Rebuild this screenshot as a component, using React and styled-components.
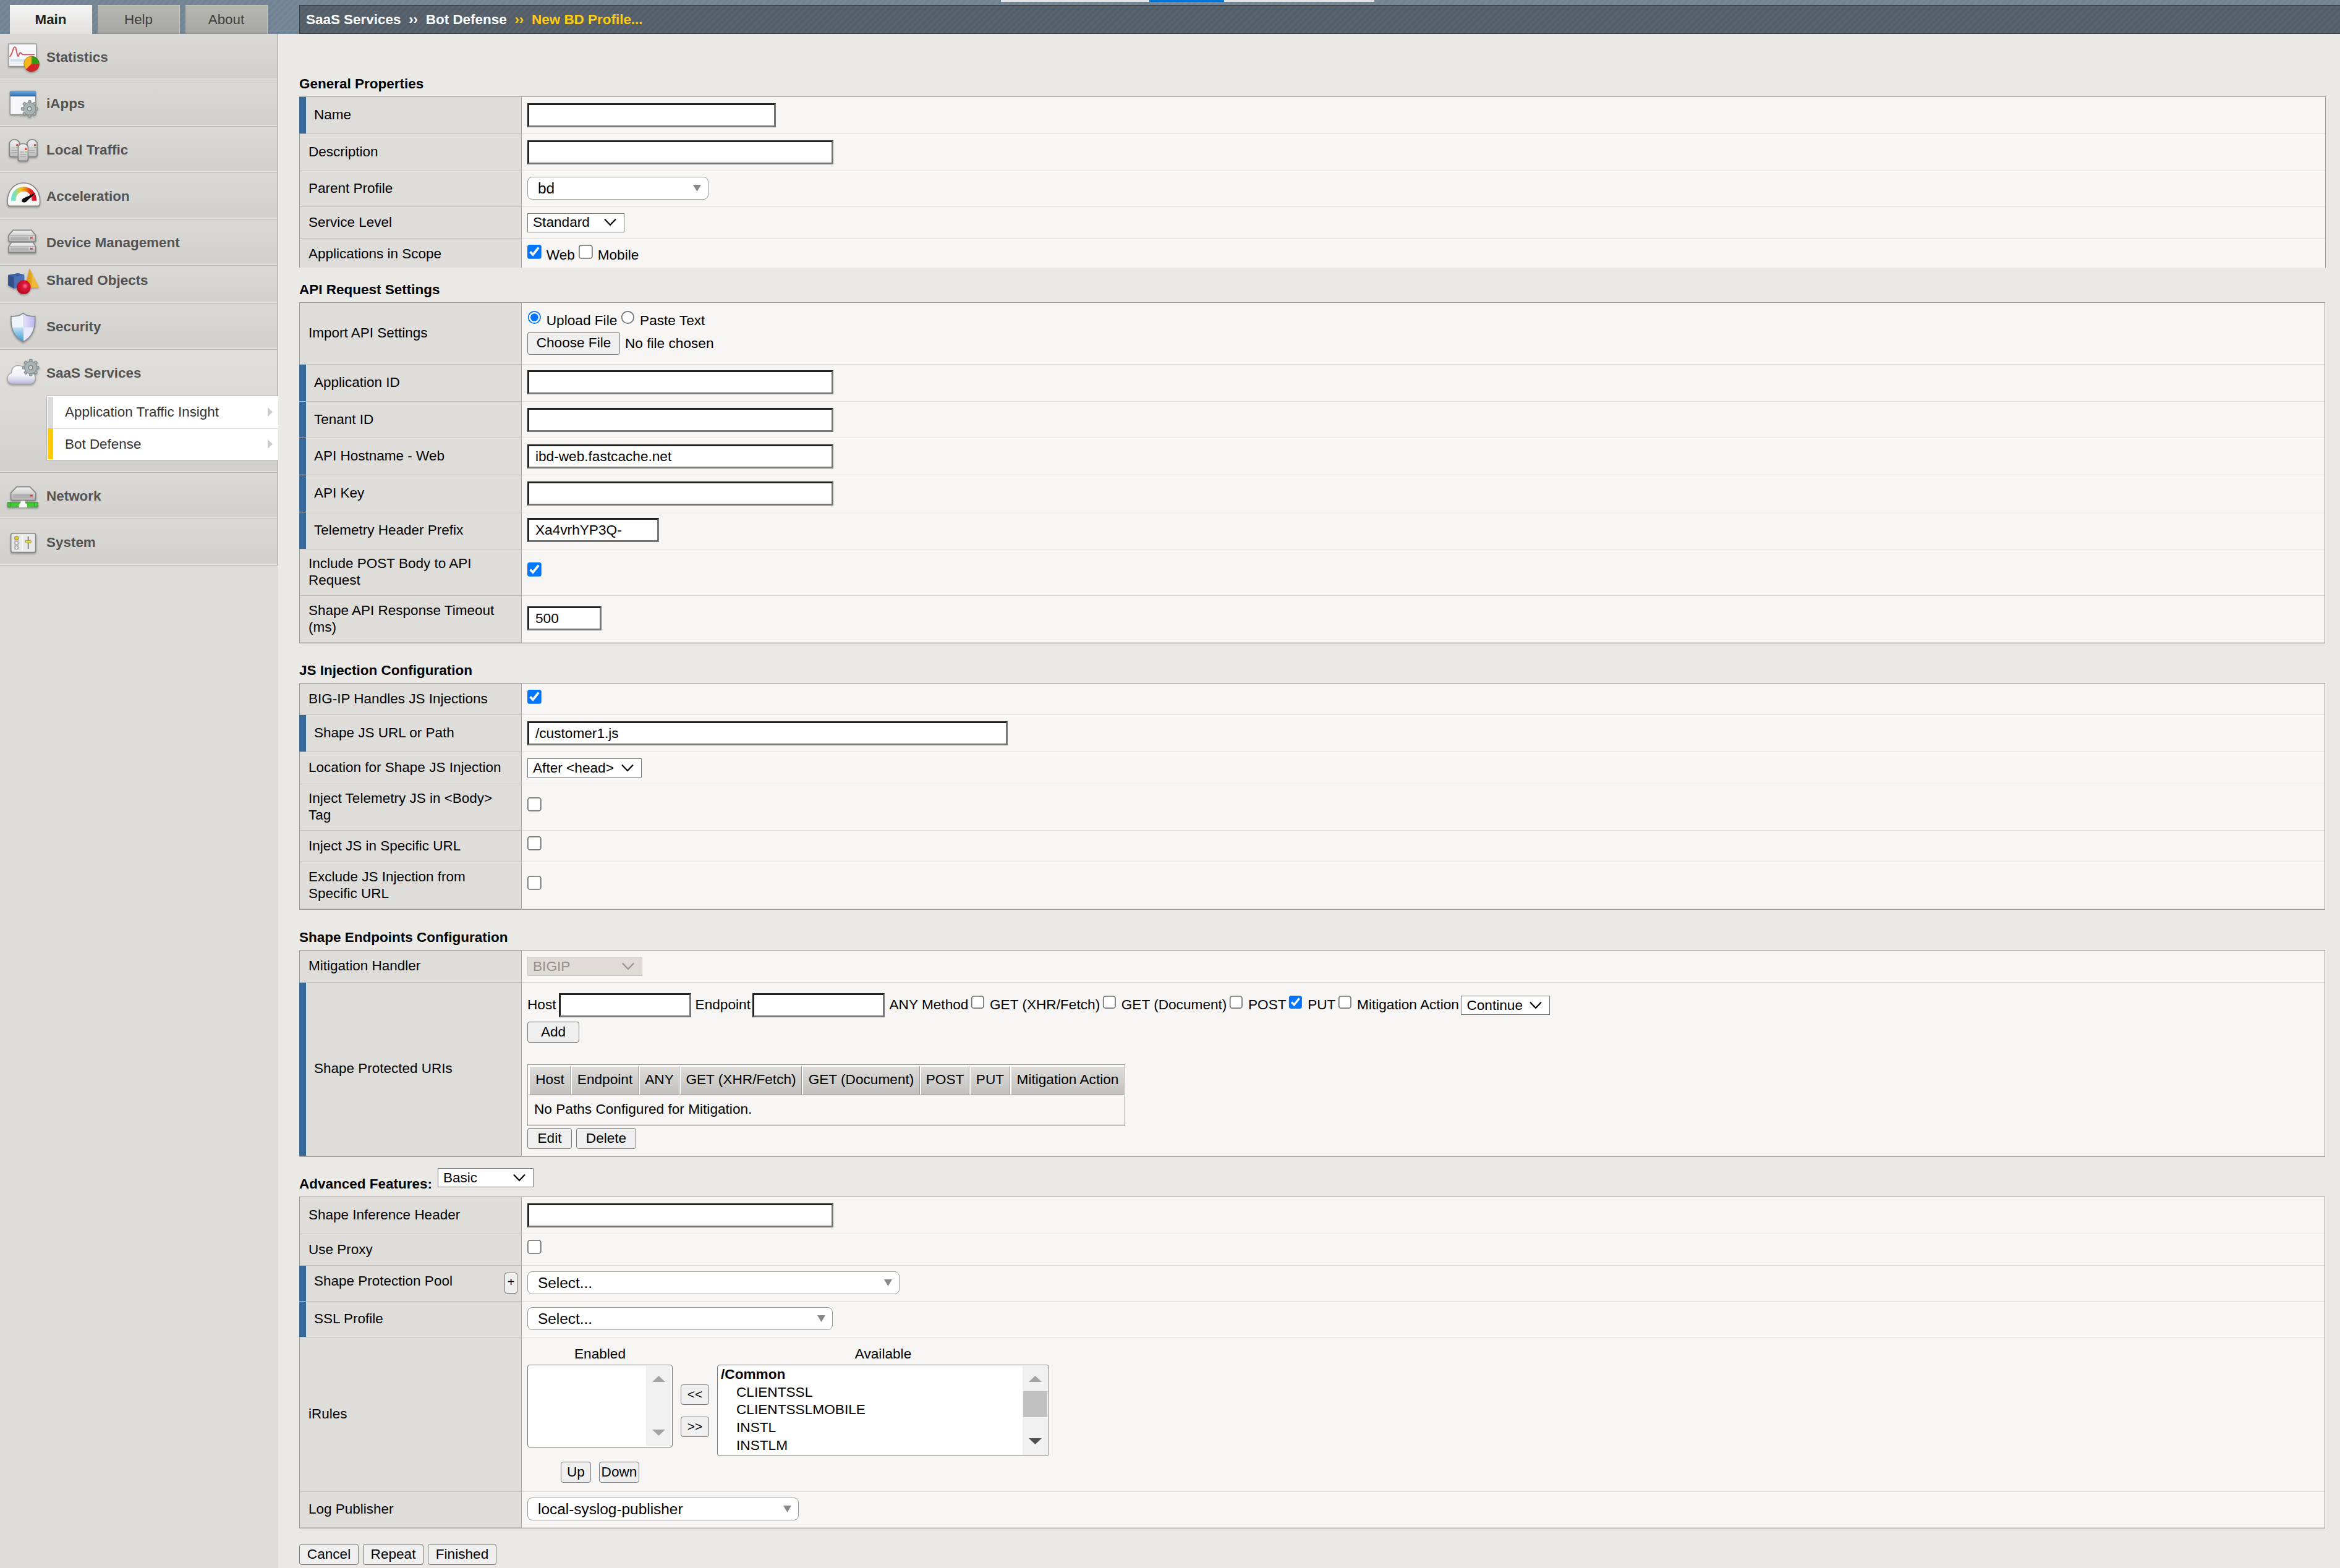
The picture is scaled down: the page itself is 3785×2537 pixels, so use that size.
import React from 'react';
import styled, { createGlobalStyle, css } from 'styled-components';

const GlobalStyle = createGlobalStyle`
  * { box-sizing: border-box; }
  html, body { margin: 0; padding: 0; background: #eae9e5; overflow: hidden; }
  body, input, button { font-family: "Liberation Sans", Arial, Helvetica, sans-serif; font-size: 22.65px; line-height: 27px; color: #000; }
`;

/* ---------- page frame ---------- */

const Page = styled.div`
  display: flex;
  flex-direction: column;
  width: 3785px;
  height: 2537px;
  position: relative;
`;

const stripes = css`
  background-image: repeating-linear-gradient(135deg, rgba(255, 255, 255, 0.02) 0 3.5px, rgba(0, 0, 0, 0.015) 3.5px 7px);
`;

const Header = styled.header`
  display: flex;
  align-items: stretch;
  height: 55px;
  padding: 8px 0 0 16px;
  background-color: #758697;
  ${stripes}
`;

const Tabs = styled.nav`
  display: flex;
  gap: 9px;
  width: 468px;
`;

const Tab = styled.div`
  display: flex;
  align-items: center;
  justify-content: center;
  width: 133px;
  font-size: 22.4px;
  font-weight: ${(p) => (p.$active ? 700 : 400)};
  color: ${(p) => (p.$active ? '#222' : '#3f3f3f')};
  background: ${(p) => (p.$active ? 'linear-gradient(#f3f3f1, #e2e1de)' : 'linear-gradient(#b7b7b2, #a6a6a2)')};
  border-top: 1px solid ${(p) => (p.$active ? '#fafaf8' : '#c6c6c2')};
  border-right: 1px solid ${(p) => (p.$active ? '#f3f3f1' : '#c9c9c6')};
  border-bottom: 1px solid ${(p) => (p.$active ? '#e2e1de' : '#8b8c8b')};
`;

const Breadcrumb = styled.div`
  flex: 1;
  display: flex;
  align-items: center;
  padding: 0 0 1px 10px;
  border: 1px solid #2f3841;
  border-right: 0;
  background-color: #545f6b;
  ${stripes}
  font-size: 22.45px;
  font-weight: 700;
  color: #fff;
`;

const Crumb = styled.span`
  color: ${(p) => (p.$current ? '#fc1' : '#fff')};
  & + & { margin-left: 12.7px; }
`;

const TopStrip = styled.div`
  position: absolute;
  top: 0;
  left: 1619px;
  display: flex;
  justify-content: center;
  width: 604px;
  height: 3px;
  background: #e3e4e8;
`;

const TopStripMark = styled.div`
  width: 121px;
  margin-right: 3px;
  background: #0078d7;
`;

const Body = styled.div`
  display: flex;
  flex: 1;
`;

/* ---------- sidebar ---------- */

const Sidebar = styled.aside`
  width: 450px;
  background: #dddcd8;
`;

const NavItem = styled.div`
  height: ${(p) => p.$h || 75}px;
  border-bottom: 1px solid #b8b7b5;
  border-right: 2px solid #bcbbb8;
  background: ${(p) => (p.$open ? 'linear-gradient(#dfdeda, #dcdbd7 40%, #d1d0cc)' : 'linear-gradient(#dad9d5, #d1d0cc)')};
  box-shadow: inset 0 -2px 0 #e2e1df;
`;

const NavHead = styled.div`
  display: flex;
  gap: 9px;
`;

const NavText = styled.div`
  padding-top: ${(p) => p.$top || 24}px;
  font-size: 22.45px;
  font-weight: 700;
  color: #535353;
`;

const SubMenu = styled.div`
  margin: 0 -2px 0 75px;
  border: 1px solid #b5b5b5;
  border-right: 0;
  padding: 1px 0 1px 1px;
  background: #fff;
`;

const SubItem = styled.div`
  display: flex;
  align-items: center;
  justify-content: space-between;
  height: 50.5px;
  padding: 0 9px 1px 19px;
  border-left: 9px solid ${(p) => (p.$active ? '#fc0' : '#dbdbdd')};
  font-size: 22.45px;
  color: #333;
  & + & { padding-top: 1px; padding-bottom: 0; box-shadow: inset 0 1px 0 #dedede; }
`;

const IconSvg = styled.svg`
  flex: none;
  width: 66px;
  filter: drop-shadow(0 2px 1.5px rgba(0, 0, 0, 0.28));
`;

/* The drawings use three units per pixel. */
const Icon = ({ y, h = 74, children }) => (
  <IconSvg viewBox={`0 ${y} 198 ${h * 3}`} height={h}>
    {children}
  </IconSvg>
);

const Gear = ({ cx, cy, fill = '#aab3b3' }) => (
  <g transform={`translate(${cx} ${cy})`} stroke="#7c8686" strokeWidth="3">
    {[0, 45, 90, 135, 180, 225, 270, 315].map((a) => (
      <rect key={a} x="-7" y="-40" width="14" height="18" rx="3" fill={fill} transform={`rotate(${a})`} />
    ))}
    <circle r="30" fill={fill} />
    <circle r="28" fill={fill} stroke="none" />
    <circle r="10" fill="#d9dad8" stroke="#818b8b" strokeWidth="5" />
  </g>
);

const StatisticsIcon = () => (
  <Icon y={-15}>
    <rect x="42" y="33" width="134" height="109" fill="#f8f8fa" stroke="#999" strokeWidth="4" />
    <rect x="50" y="107" width="90" height="12" fill="#cfdfee" />
    <rect x="50" y="124" width="80" height="7" fill="#e3ecf4" />
    <path d="M47 96l9-14 10-28q6-10 11 0l8 36q4 8 8-6 3-12 9-6l8 7h58" fill="none" stroke="#cf5a62" strokeWidth="6" />
    <circle cx="153" cy="130" r="38" fill="#f3b71b" />
    <path d="M153 130V92a38 38 0 0 1 38 38z" fill="#2f9b12" />
    <path d="M153 130h38a38 38 0 0 1-65 27z" fill="#d3212c" />
    <circle cx="153" cy="130" r="37" fill="none" stroke="#7a4a18" strokeOpacity=".45" strokeWidth="3" />
  </Icon>
);

const IAppsIcon = () => (
  <Icon y={210}>
    <defs>
      <linearGradient id="iappsBar" x1="0" y1="0" x2="0" y2="1">
        <stop offset="0" stopColor="#6aa9e0" />
        <stop offset="1" stopColor="#2f6fb0" />
      </linearGradient>
    </defs>
    <rect x="49" y="262" width="124" height="114" rx="4" fill="#f7f7fa" stroke="#8c8f92" strokeWidth="4" />
    <rect x="49" y="262" width="124" height="26" fill="url(#iappsBar)" />
    <Gear cx={143} cy={348} />
  </Icon>
);

const Tower = ({ x, y }) => (
  <g>
    <path d={`M${x} ${y + 14}l10-12q14-5 28 0l10 12v64q-4 5-10 5h-28q-8 0-10-5z`} fill="url(#towerFill)" stroke="#858585" strokeWidth="5" />
    <path d={`M${x + 10} ${y + 40}h18M${x + 10} ${y + 52}h28M${x + 10} ${y + 62}h28`} stroke="#aaa" strokeWidth="4" />
    <rect x={x + 33} y={y + 22} width="9" height="9" fill="#e0333c" />
    <rect x={x + 33} y={y + 36} width="9" height="6" fill="#7edb63" />
  </g>
);

const LocalTrafficIcon = () => (
  <Icon y={435}>
    <defs>
      <linearGradient id="towerFill" x1="0" y1="0" x2="0" y2="1">
        <stop offset="0" stopColor="#f1f1f1" />
        <stop offset="1" stopColor="#bcbcbc" />
      </linearGradient>
    </defs>
    <Tower x={46} y={498} />
    <Tower x={132} y={498} />
    <Tower x={88} y={518} />
  </Icon>
);

const AccelerationIcon = () => (
  <Icon y={660}>
    <defs>
      <linearGradient id="dial" x1="0" y1="0" x2="1" y2="0">
        <stop offset="0" stopColor="#6fe0d2" />
        <stop offset=".18" stopColor="#a6d97c" />
        <stop offset=".35" stopColor="#f3c31a" />
        <stop offset=".6" stopColor="#ef8416" />
        <stop offset=".8" stopColor="#e02b1b" />
        <stop offset="1" stopColor="#d81026" />
      </linearGradient>
    </defs>
    <path d="M36 798C36 742 72 708 115 708S194 742 194 798Q194 820 184 820H46Q36 820 36 798z" fill="#f7f7f5" stroke="#858585" strokeWidth="5" />
    <path d="M65 794C65 760 85 738 115 738S166 762 166 794" fill="none" stroke="url(#dial)" strokeWidth="23" />
    <path d="M174 755L126 800Q114 806 106 798Q104 788 114 782z" fill="#0b0b0b" />
  </Icon>
);

const DiskPair = () => (
  <>
    <defs>
      <linearGradient id="diskFill" x1="0" y1="0" x2="0" y2="1">
        <stop offset="0" stopColor="#f0f0f0" />
        <stop offset="1" stopColor="#b5b5b5" />
      </linearGradient>
    </defs>
    <path d="M42 1016l14-20h104l13 20v30H42z" fill="url(#diskFill)" stroke="#858585" strokeWidth="5" />
    <path d="M42 962l22-25h88l21 25v24q0 7-8 7H50q-8 0-8-7z" fill="url(#diskFill)" stroke="#858585" strokeWidth="5" />
    <path d="M46 964h122M46 1017h122" stroke="#9b9b9b" strokeWidth="3" />
    <rect x="52" y="969" width="86" height="15" fill="#a9a9a9" opacity=".7" />
    <rect x="52" y="1022" width="86" height="15" fill="#a9a9a9" opacity=".7" />
    <rect x="147" y="970" width="11" height="9" fill="#dd4252" />
    <rect x="147" y="1023" width="11" height="9" fill="#dd4252" />
  </>
);

const DeviceIcon = () => (
  <Icon y={885}>
    <DiskPair />
  </Icon>
);

const SharedIcon = () => (
  <Icon y={1110} h={60}>
    <defs>
      <radialGradient id="ball" cx=".6" cy=".42" r=".6">
        <stop offset="0" stopColor="#ff7a9c" />
        <stop offset=".35" stopColor="#db1638" />
        <stop offset="1" stopColor="#b50b22" />
      </radialGradient>
      <linearGradient id="cone" x1="0" y1="0" x2="1" y2="0">
        <stop offset="0" stopColor="#d99a1c" />
        <stop offset=".45" stopColor="#e3a724" />
        <stop offset=".55" stopColor="#f4bb3c" />
        <stop offset="1" stopColor="#eeb233" />
      </linearGradient>
    </defs>
    <path d="M40 1155l48-9 30 8v58l-50 8-28-15z" fill="#4b6fb3" />
    <path d="M40 1155l28 9v56l-28-15z" fill="#34508b" />
    <path d="M40 1155l48-9 30 8-50 10z" fill="#3e60a3" />
    <path d="M143 1123l47 92-40 2-28-8z" fill="url(#cone)" />
    <circle cx="115" cy="1214" r="34" fill="url(#ball)" />
  </Icon>
);

const SecurityIcon = () => (
  <Icon y={273}>
    <defs>
      <clipPath id="shieldClip">
        <path d="M112 320Q132 338 170 335Q176 428 112 459Q48 428 54 335Q92 338 112 320z" />
      </clipPath>
      <linearGradient id="shieldBlue" x1="0" y1="0" x2="0" y2="1">
        <stop offset="0" stopColor="#c4e3f6" />
        <stop offset="1" stopColor="#2a8fce" />
      </linearGradient>
      <linearGradient id="shieldLilac" x1="0" y1="0" x2="1" y2="0">
        <stop offset="0" stopColor="#e6e3fb" />
        <stop offset="1" stopColor="#b4adf0" />
      </linearGradient>
    </defs>
    <g clipPath="url(#shieldClip)">
      <rect x="50" y="315" width="62" height="76" fill="#eff4fb" />
      <rect x="112" y="315" width="66" height="76" fill="url(#shieldLilac)" />
      <rect x="50" y="389" width="64" height="76" fill="url(#shieldBlue)" />
      <rect x="114" y="389" width="64" height="76" fill="#ebe9fc" />
    </g>
    <path d="M112 320Q132 338 170 335Q176 428 112 459Q48 428 54 335Q92 338 112 320z" fill="none" stroke="#8a8d92" strokeWidth="5" />
  </Icon>
);

const SaasIcon = () => (
  <Icon y={498}>
    <defs>
      <linearGradient id="cloud" x1="0" y1="0" x2="0" y2="1">
        <stop offset="0" stopColor="#ffffff" />
        <stop offset=".55" stopColor="#f1f1f8" />
        <stop offset="1" stopColor="#b9b8d6" />
      </linearGradient>
    </defs>
    <path d="M58 664Q36 660 36 638Q36 616 56 610Q58 574 90 574Q118 576 126 604Q172 604 172 638Q170 660 150 664z" fill="url(#cloud)" stroke="#a3a3ac" strokeWidth="4" />
    <Gear cx={149} cy={584} />
  </Icon>
);

const NetworkIcon = () => (
  <Icon y={1095}>
    <path d="M53 1192l28-29h64l28 29v28q0 9-9 9H62q-9 0-9-9z" fill="url(#diskFill)" stroke="#858585" strokeWidth="5" />
    <rect x="62" y="1198" width="100" height="20" fill="#b1b1b1" />
    <rect x="146" y="1202" width="12" height="8" fill="#e0333c" />
    <rect x="37" y="1238" width="147" height="23" rx="2" fill="#43c936" stroke="#5e8f58" strokeWidth="4" />
    <path d="M52 1238v23M168 1238v23" stroke="#2f9a28" strokeWidth="3" />
    <path d="M100 1231h22v10l10 8v14H92v-14l8-8z" fill="#f6f6f6" />
  </Icon>
);

const SystemIcon = () => (
  <Icon y={1320}>
    <rect x="53" y="1389" width="120" height="92" rx="8" fill="#e9e9e9" stroke="#858585" strokeWidth="5" />
    <path d="M108 1396v78" stroke="#fafafa" strokeWidth="5" />
    <rect x="68" y="1402" width="24" height="66" fill="#c9c9c9" />
    <circle cx="80" cy="1412" r="9" fill="#e2cf2c" stroke="#8b8540" strokeWidth="3" />
    <circle cx="80" cy="1435" r="8" fill="#efefef" stroke="#8d8d8d" strokeWidth="3" />
    <circle cx="80" cy="1458" r="8" fill="#efefef" stroke="#8d8d8d" strokeWidth="3" />
    <path d="M137 1404v60" stroke="#858585" strokeWidth="6" />
    <rect x="124" y="1423" width="27" height="12" rx="3" fill="#eadb3e" stroke="#96904a" strokeWidth="3" />
  </Icon>
);

const Triangle = styled.svg`
  flex: none;
  display: block;
  fill: ${(p) => p.$fill};
`;

const RightMark = () => (
  <Triangle $fill="#cbcbcb" width="8" height="15" viewBox="0 0 8 15"><path d="M0 0L8 7.5 0 15z" /></Triangle>
);

/* ---------- form sections ---------- */

const Content = styled.main`
  flex: 1;
  display: flex;
  flex-direction: column;
  padding-left: 34px;
`;

const Heading = styled.div`
  display: flex;
  align-items: flex-end;
  gap: 9px;
  height: ${(p) => p.$h}px;
  padding-bottom: 7px;
  font-weight: 700;
  font-size: 22.5px;
`;

const HeadingTool = styled.div`
  margin-bottom: 8px;
  font-weight: 400;
`;

const Table = styled.div`
  width: ${(p) => (p.$open ? 3278 : 3277)}px;
  border: 1px solid #989896;
  ${(p) => p.$open && 'border-bottom: 0;'}
`;

const Row = styled.div`
  display: grid;
  grid-template-columns: 359px 1fr;
  height: ${(p) => p.$h}px;
`;

const LabelCell = styled.div`
  display: flex;
  align-items: center;
  justify-content: space-between;
  border-right: 1px solid #a3a3a1;
  border-bottom: ${(p) => (p.$last ? 0 : 1)}px solid #c1c0be;
  padding: 0 6px 2px ${(p) => (p.$required ? 24 : 14)}px;
  margin-left: ${(p) => (p.$required ? -1 : 0)}px;
  background: ${(p) => (p.$required ? 'linear-gradient(to right, #36699a 11px, #deddd9 11px)' : '#deddd9')};
  font-size: 22.5px;
`;

const LabelText = styled.span`
  max-width: 325px;
  margin-top: ${(p) => p.$raise || 0}px;
`;

const ValueCell = styled.div`
  display: flex;
  flex-direction: column;
  align-items: flex-start;
  justify-content: ${(p) => (p.$pad ? 'flex-start' : 'center')};
  padding: ${(p) => p.$pad || 0}px 0 ${(p) => (p.$lift || 0) * 2}px 9px;
  border-bottom: ${(p) => (p.$last ? 0 : 1)}px solid #dcdbda;
  background: #f7f6f4;
`;

const Field = ({ label, h, required, last, pad, lift, tool, raise, children }) => (
  <Row $h={h}>
    <LabelCell $required={required} $last={last}>
      <LabelText $raise={raise}>{label}</LabelText>
      {tool}
    </LabelCell>
    <ValueCell $pad={pad} $lift={lift} $last={last}>{children}</ValueCell>
  </Row>
);

/* ---------- controls ---------- */

const TextInput = styled.input.attrs({ type: 'text' })`
  flex: none;
  width: ${(p) => p.$w}px;
  height: 39px;
  padding: 0 10px;
  border: 3px solid;
  border-color: #212121 #767676 #767676 #212121;
  border-radius: 0;
  background: #fff;
  outline: 0;
`;

const Tick = styled.input`
  flex: none;
  width: 13px;
  height: 13px;
  margin: 0;
  zoom: 1.75;
`;

const Line = styled.div`
  display: flex;
  align-items: center;
`;

const TickWrap = styled.span`
  display: flex;
  flex: none;
  margin: ${(p) => (p.$bare ? 0 : -9)}px 8px 0 ${(p) => p.$ml || 0}px;
`;

const Check = ({ on, ml, bare, type = 'checkbox' }) => (
  <TickWrap $ml={ml} $bare={bare}><Tick type={type} defaultChecked={on} /></TickWrap>
);

const SelectBox = styled.div`
  display: flex;
  align-items: center;
  justify-content: space-between;
  flex: none;
  width: ${(p) => p.$w}px;
  height: 31px;
  padding: 0 12px 1px 8px;
  border: 1px solid ${(p) => (p.$disabled ? '#cac8c4' : '#767676')};
  background: ${(p) => (p.$disabled ? '#dfdcd8' : '#fff')};
  color: ${(p) => (p.$disabled ? '#93908d' : '#000')};
`;

const Select = ({ w, children, disabled }) => (
  <SelectBox $w={w} $disabled={disabled}>
    <span>{children}</span>
    <svg width="20" height="13" viewBox="0 0 20 13">
      <path d="M1 1.5L10 11L19 1.5" fill="none" stroke="currentColor" strokeWidth="2.2" />
    </svg>
  </SelectBox>
);

const ComboBox = styled.div`
  display: flex;
  align-items: center;
  justify-content: space-between;
  width: ${(p) => p.$w}px;
  height: 37px;
  padding: 0 11px 1px 16px;
  border: 1px solid #999;
  border-radius: 8px;
  background: #fff;
  font-size: 24.4px;
`;

const Combo = ({ w, children }) => (
  <ComboBox $w={w}>
    <span>{children}</span>
    <Triangle $fill="#888" width="13" height="11" viewBox="0 0 13 11"><path d="M0 0h13L6.5 11z" /></Triangle>
  </ComboBox>
);

const Button = styled.button`
  display: flex;
  align-items: center;
  justify-content: center;
  flex: none;
  width: ${(p) => p.$w}px;
  height: ${(p) => p.$h || 34}px;
  padding: 0 0 2px;
  border: 1px solid #767676;
  border-radius: 4px;
  background: #efefef;
  font-size: ${(p) => p.$size || 22.6}px;
  white-space: nowrap;
`;

const ScopeLine = styled(Line)`
  margin-top: 5px;
`;

const FileLine = styled.div`
  display: flex;
  align-items: center;
  gap: 8px;
  margin-top: 5px;
`;

const Gap = styled.span`
  flex: none;
  margin: 0 ${(p) => p.$r || 0}px 2px ${(p) => p.$l || 0}px;
`;

const ButtonLine = styled.div`
  display: flex;
  gap: ${(p) => p.$gap || 7}px;
  margin: ${(p) => p.$mt || 0}px 0 0 ${(p) => p.$ml || 0}px;
`;

/* ---------- protected URI list ---------- */

const UriTable = styled.div`
  width: 967px;
  height: 100px;
  margin-top: 35px;
  padding: 1px;
  border: 1px solid #999;
`;

const UriHead = styled.div`
  display: flex;
  height: 48px;
  border-bottom: 1px solid #999;
`;

const UriHeadCell = styled.div`
  width: ${(p) => p.$w}px;
  display: flex;
  align-items: center;
  justify-content: center;
  padding-bottom: 5px;
  border-top: 2px solid #fbfbfa;
  border-left: 2px solid #fbfbfa;
  border-right: 1px solid #999;
  background: linear-gradient(#dedcd9, #c2c1bd);
  white-space: nowrap;
  &:last-child { border-right: 0; }
`;

const UriBody = styled.div`
  display: flex;
  align-items: center;
  height: 48px;
  padding: 0 0 3px 9px;
  border-bottom: 1px solid #dcdbda;
`;

/* ---------- iRules picker ---------- */

const Picker = styled.div`
  display: flex;
  align-items: flex-start;
`;

const PickerCol = styled.div`
  width: ${(p) => p.$w}px;
`;

const PickerTitle = styled.div`
  height: 31px;
  text-align: center;
`;

const MoveCol = styled.div`
  display: flex;
  flex-direction: column;
  gap: 19px;
  padding: 63px 13px 0 13px;
`;

const ListBox = styled.div`
  display: flex;
  justify-content: space-between;
  height: ${(p) => p.$h}px;
  border: 1px solid #767676;
  border-radius: 4px;
  background: #fff;
  overflow: hidden;
`;

const Options = styled.div`
  padding: 0 0 0 5px;
`;

const Option = styled.div`
  height: 28.7px;
  line-height: 28px;
  padding-left: ${(p) => (p.$group ? 0 : 25)}px;
  font-weight: ${(p) => (p.$group ? 700 : 400)};
`;

const ScrollBar = styled.div`
  display: flex;
  flex-direction: column;
  align-items: center;
  justify-content: space-between;
  width: 41px;
  margin: 1px;
  padding: 16px 0 17px;
  background: #f0f0f0;
`;

const Thumb = styled.div`
  width: 39px;
  height: 42px;
  margin: 15px 0 auto;
  background: #c1c1c1;
`;

const Up = () => <Triangle $fill="#a3a3a3" width="21" height="10" viewBox="0 0 21 10"><path d="M0 10h21L10.5 0z" /></Triangle>;
const Down = ({ fill = '#a3a3a3' }) => <Triangle $fill={fill} width="21" height="10" viewBox="0 0 21 10"><path d="M0 0h21L10.5 10z" /></Triangle>;

const NAV_TOP = [
  ['Statistics', StatisticsIcon],
  ['iApps', IAppsIcon],
  ['Local Traffic', LocalTrafficIcon],
  ['Acceleration', AccelerationIcon],
  ['Device Management', DeviceIcon],
  ['Shared Objects', SharedIcon, 61, 10],
  ['Security', SecurityIcon],
];

const NAV_BOTTOM = [
  ['Network', NetworkIcon],
  ['System', SystemIcon],
];

const NavEntry = ({ entry: [text, Pic, h, top] }) => (
  <NavItem $h={h}>
    <NavHead><Pic /><NavText $top={top}>{text}</NavText></NavHead>
  </NavItem>
);

const URI_COLUMNS = [
  ['Host', 68], ['Endpoint', 110], ['ANY', 66], ['GET (XHR/Fetch)', 198],
  ['GET (Document)', 191], ['POST', 80], ['PUT', 66], ['Mitigation Action', 184],
];

export default function App() {
  return (
    <Page>
      <GlobalStyle />
      <Header>
        <Tabs>
          <Tab $active>Main</Tab>
          <Tab>Help</Tab>
          <Tab>About</Tab>
        </Tabs>
        <Breadcrumb>
          <Crumb>SaaS Services</Crumb>
          <Crumb>››</Crumb>
          <Crumb>Bot Defense</Crumb>
          <Crumb $current>››</Crumb>
          <Crumb $current>New BD Profile...</Crumb>
        </Breadcrumb>
      </Header>
      <TopStrip><TopStripMark /></TopStrip>
      <Body>
        <Sidebar>
          {NAV_TOP.map((e) => <NavEntry key={e[0]} entry={e} />)}
          <NavItem $h={199} $open>
            <NavHead><SaasIcon /><NavText>SaaS Services</NavText></NavHead>
            <SubMenu>
              <SubItem>Application Traffic Insight<RightMark /></SubItem>
              <SubItem $active>Bot Defense<RightMark /></SubItem>
            </SubMenu>
          </NavItem>
          {NAV_BOTTOM.map((e) => <NavEntry key={e[0]} entry={e} />)}
        </Sidebar>

        <Content>
          <Heading $h={101}>General Properties</Heading>
          <Table $open>
            <Field label="Name" h={60} required><TextInput $w={402} /></Field>
            <Field label="Description" h={60}><TextInput $w={495} /></Field>
            <Field label="Parent Profile" h={58} lift={1}><Combo w={293}>bd</Combo></Field>
            <Field label="Service Level" h={51}><Select w={157}>Standard</Select></Field>
            <Field label="Applications in Scope" h={47} last raise={3}>
              <ScopeLine><Check on />Web<Check ml={6} />Mobile</ScopeLine>
            </Field>
          </Table>

          <Heading $h={56}>API Request Settings</Heading>
          <Table>
            <Field label="Import API Settings" h={100} pad={15}>
              <Line><Check type="radio" on />Upload File<Check type="radio" ml={6} />Paste Text</Line>
              <FileLine><Button $w={150} $h={37}>Choose File</Button>No file chosen</FileLine>
            </Field>
            <Field label="Application ID" h={60} required lift={1}><TextInput $w={495} /></Field>
            <Field label="Tenant ID" h={59} required><TextInput $w={495} /></Field>
            <Field label="API Hostname - Web" h={60} required><TextInput $w={495} defaultValue="ibd-web.fastcache.net" /></Field>
            <Field label="API Key" h={60} required lift={0.5}><TextInput $w={495} /></Field>
            <Field label="Telemetry Header Prefix" h={60} required lift={1}><TextInput $w={213} defaultValue="Xa4vrhYP3Q-" /></Field>
            <Field label="Include POST Body to API Request" h={75} lift={4.5}><Check on bare /></Field>
            <Field label="Shape API Response Timeout (ms)" h={76} lift={1}><TextInput $w={120} defaultValue="500" /></Field>
          </Table>

          <Heading $h={64}>JS Injection Configuration</Heading>
          <Table>
            <Field label="BIG-IP Handles JS Injections" h={51} lift={3.5}><Check on bare /></Field>
            <Field label="Shape JS URL or Path" h={60} required><TextInput $w={777} defaultValue="/customer1.js" /></Field>
            <Field label="Location for Shape JS Injection" h={52}><Select w={185}>After &lt;head&gt;</Select></Field>
            <Field label="Inject Telemetry JS in <Body> Tag" h={75} lift={4.5}><Check bare /></Field>
            <Field label="Inject JS in Specific URL" h={51} lift={4.5}><Check bare /></Field>
            <Field label="Exclude JS Injection from Specific URL" h={76} lift={4}><Check bare /></Field>
          </Table>

          <Heading $h={65}>Shape Endpoints Configuration</Heading>
          <Table>
            <Field label="Mitigation Handler" h={52}><Select w={186} disabled>BIGIP</Select></Field>
            <Field label="Shape Protected URIs" h={281} required pad={17} raise={-2}>
              <Line>
                <Gap $r={4}>Host</Gap><TextInput $w={214} />
                <Gap $l={7} $r={3.5}>Endpoint</Gap><TextInput $w={214} />
                <Gap $l={7}>ANY Method</Gap><Check ml={3.8} />
                <Gap>GET (XHR/Fetch)</Gap><Check ml={3.8} />
                <Gap>GET (Document)</Gap><Check ml={3.8} />
                <Gap>POST</Gap><Check on ml={3.8} />
                <Gap>PUT</Gap><Check ml={3.8} />
                <Gap $r={3.5}>Mitigation Action</Gap><Select w={144}>Continue</Select>
              </Line>
              <ButtonLine $mt={7}><Button $w={84}>Add</Button></ButtonLine>
              <UriTable>
                <UriHead>
                  {URI_COLUMNS.map(([t, w]) => <UriHeadCell key={t} $w={w}>{t}</UriHeadCell>)}
                </UriHead>
                <UriBody>No Paths Configured for Mitigation.</UriBody>
              </UriTable>
              <ButtonLine $mt={3}><Button $w={72}>Edit</Button><Button $w={97}>Delete</Button></ButtonLine>
            </Field>
          </Table>

          <Heading $h={64}>
            Advanced Features:
            <HeadingTool><Select w={155}>Basic</Select></HeadingTool>
          </Heading>
          <Table>
            <Field label="Shape Inference Header" h={60} lift={0.5}><TextInput $w={495} /></Field>
            <Field label="Use Proxy" h={51} lift={4.5}><Check bare /></Field>
            <Field
              label="Shape Protection Pool"
              h={58}
              required
              raise={-6}
              lift={1}
              tool={<Button $w={21} $h={34} $size={20}>+</Button>}
            >
              <Combo w={602}>Select...</Combo>
            </Field>
            <Field label="SSL Profile" h={58} required lift={1}><Combo w={494}>Select...</Combo></Field>
            <Field label="iRules" h={250} pad={13}>
              <Picker>
                <PickerCol $w={235}>
                  <PickerTitle>Enabled</PickerTitle>
                  <ListBox $h={134}><Options /><ScrollBar><Up /><Down /></ScrollBar></ListBox>
                  <ButtonLine $mt={23} $ml={54} $gap={13}><Button $w={49}>Up</Button><Button $w={65}>Down</Button></ButtonLine>
                </PickerCol>
                <MoveCol>
                  <Button $w={46} $h={33} $size={21}>&lt;&lt;</Button>
                  <Button $w={46} $h={33} $size={21}>&gt;&gt;</Button>
                </MoveCol>
                <PickerCol $w={537}>
                  <PickerTitle>Available</PickerTitle>
                  <ListBox $h={148}>
                    <Options>
                      <Option $group>/Common</Option>
                      <Option>CLIENTSSL</Option>
                      <Option>CLIENTSSLMOBILE</Option>
                      <Option>INSTL</Option>
                      <Option>INSTLM</Option>
                    </Options>
                    <ScrollBar><Up /><Thumb /><Down fill="#505050" /></ScrollBar>
                  </ListBox>
                </PickerCol>
              </Picker>
            </Field>
            <Field label="Log Publisher" h={58} lift={1}><Combo w={439}>local-syslog-publisher</Combo></Field>
          </Table>

          <ButtonLine $mt={25} $gap={7}>
            <Button $w={96}>Cancel</Button>
            <Button $w={98}>Repeat</Button>
            <Button $w={111}>Finished</Button>
          </ButtonLine>
        </Content>
      </Body>
    </Page>
  );
}
